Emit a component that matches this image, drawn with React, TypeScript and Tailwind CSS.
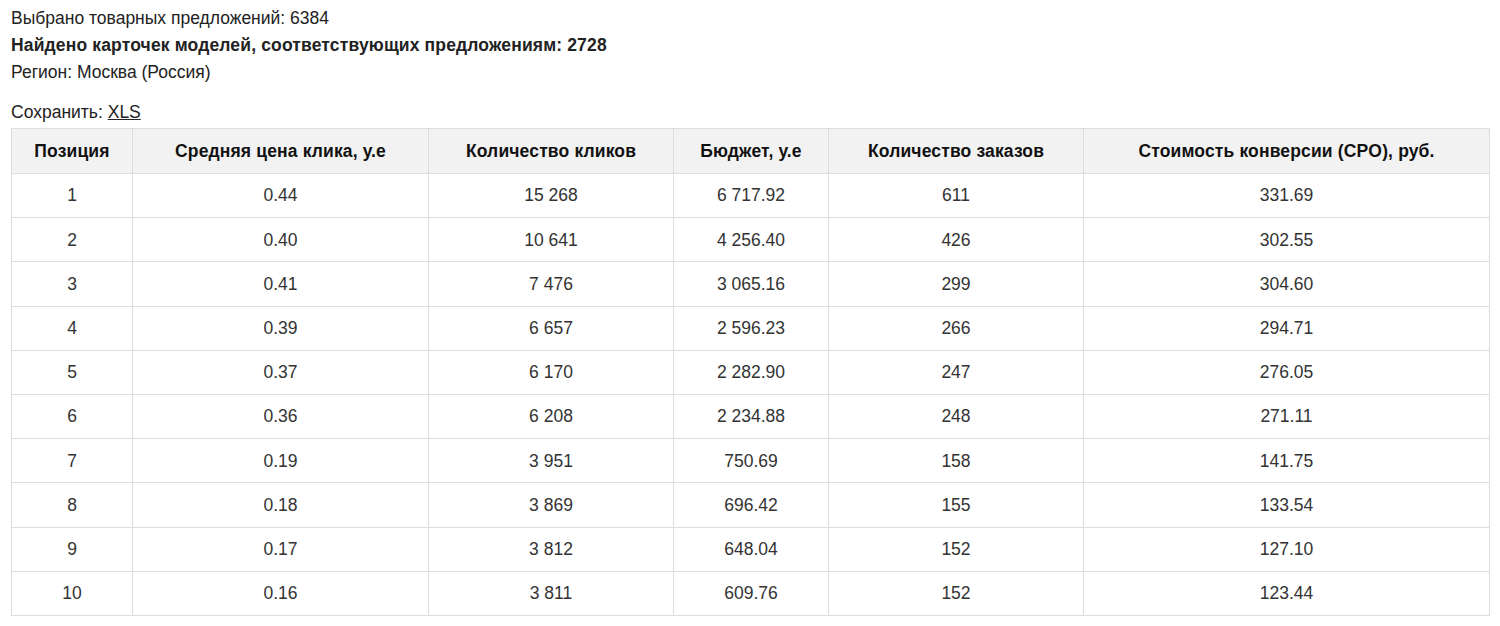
const rows = [
  ["1", "0.44", "15 268", "6 717.92", "611", "331.69"],
  ["2", "0.40", "10 641", "4 256.40", "426", "302.55"],
  ["3", "0.41", "7 476", "3 065.16", "299", "304.60"],
  ["4", "0.39", "6 657", "2 596.23", "266", "294.71"],
  ["5", "0.37", "6 170", "2 282.90", "247", "276.05"],
  ["6", "0.36", "6 208", "2 234.88", "248", "271.11"],
  ["7", "0.19", "3 951", "750.69", "158", "141.75"],
  ["8", "0.18", "3 869", "696.42", "155", "133.54"],
  ["9", "0.17", "3 812", "648.04", "152", "127.10"],
  ["10", "0.16", "3 811", "609.76", "152", "123.44"],
];

const headers = [
  { label: "Позиция", w: "w-[121px]" },
  { label: "Средняя цена клика, у.е", w: "w-[296px]" },
  { label: "Количество кликов", w: "w-[245px]" },
  { label: "Бюджет, у.е", w: "w-[155px]" },
  { label: "Количество заказов", w: "w-[255px]" },
  { label: "Стоимость конверсии (CPO), руб.", w: "w-[406px]" },
];

export default function App() {
  return (
    <div className="min-h-[626px] bg-white px-[11px] pt-[5px] font-['Liberation_Sans',Arial,sans-serif] text-[17.5px] text-[#222]">
      <div className="leading-[27px]">Выбрано товарных предложений: 6384</div>
      <div className="font-bold leading-[27px] tracking-[0.15px]">
        Найдено карточек моделей, соответствующих предложениям: 2728
      </div>
      <div className="leading-[27px]">Регион: Москва (Россия)</div>

      <div className="mt-[16px] mb-[6px] leading-[20px]">
        Сохранить:{" "}
        <a href="#" className="text-[#222] underline">
          XLS
        </a>
      </div>

      <table className="w-[1478px] table-fixed border-collapse">
        <thead>
          <tr className="h-[45px] bg-[#f2f2f2]">
            {headers.map((h) => (
              <th
                key={h.label}
                className={`${h.w} border border-[#dddddd] text-center font-bold tracking-[0.15px] text-[#111]`}
              >
                {h.label}
              </th>
            ))}
          </tr>
        </thead>
        <tbody>
          {rows.map((r) => (
            <tr key={r[0]} className="h-[44.2px]">
              {r.map((cell, i) => (
                <td
                  key={i}
                  className="border border-[#dddddd] text-center text-[#333]"
                >
                  {cell}
                </td>
              ))}
            </tr>
          ))}
        </tbody>
      </table>
    </div>
  );
}
